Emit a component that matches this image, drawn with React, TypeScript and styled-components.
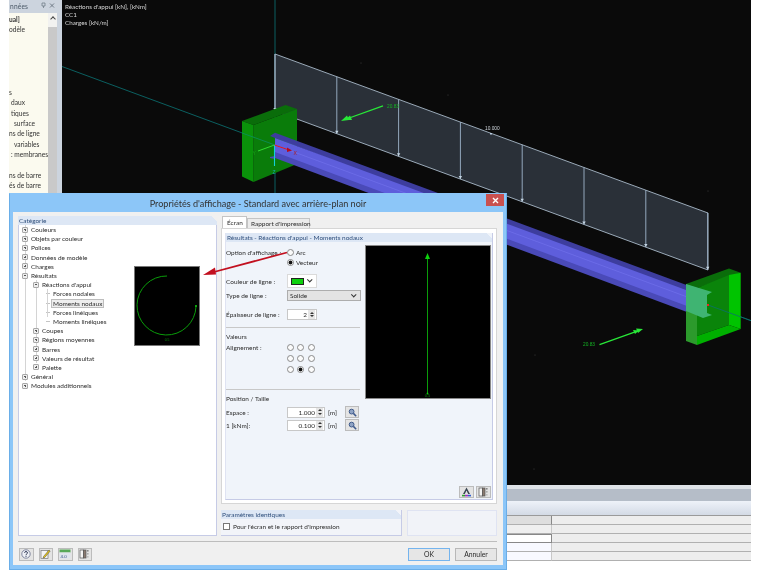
import styled, { createGlobalStyle } from "styled-components";
import { ReactNode } from "react";

const Global = createGlobalStyle`
  html, body { margin: 0; padding: 0; background: #fff; overflow: hidden; }
  * { box-sizing: border-box; }
`;

const Page = styled.div`
  position: relative;
  width: 760px;
  height: 570px;
  padding: 0 9px;
  background: #fff;
  font-family: "Lato", "Liberation Sans", sans-serif;
  font-size: 6.45px;
  color: #2c2c2c;
  overflow: hidden;
  filter: blur(0.25px);
`;

const AppWindow = styled.div`
  display: flex;
  flex-direction: column;
  height: 570px;
`;

const MainRow = styled.div`
  display: flex;
  height: 485px;
`;

const SidePanel = styled.div`
  width: 53px;
  display: flex;
  flex-direction: column;
  background: #ccd4de;
`;

const SideHeader = styled.div`
  height: 11px;
  display: flex;
  align-items: center;
  justify-content: space-between;
  padding: 0 2px 0 1px;
  width: 48px;
  color: #4a5866;
  font-size: 6.6px;
  span { letter-spacing: 0.2px; }
`;

const SideBody = styled.div`
  margin-top: 2px;
  flex: 1;
  width: 47px;
  display: flex;
  background: #fbfaef;
  position: relative;
`;

const SideList = styled.div`
  width: 39px;
  padding-top: 1px;
  white-space: nowrap;
  font-size: 6.6px;
`;

const SideItem = styled.div<{ $indent?: number; $bold?: boolean }>`
  height: 10.4px;
  line-height: 10.4px;
  padding-left: ${(p) => p.$indent ?? 0}px;
  font-weight: ${(p) => (p.$bold ? 700 : 400)};
  color: #333;
`;

const SideScroll = styled.div`
  position: absolute;
  top: 0;
  right: -1px;
  width: 9px;
  height: 100%;
  background: #c9c9c9;
  &::before {
    content: "";
    display: block;
    height: 14px;
    background: #f2f2f0;
  }
  &::after {
    content: "";
    position: absolute;
    top: 4px;
    left: 2.5px;
    width: 3px;
    height: 3px;
    border-left: 1px solid #444;
    border-top: 1px solid #444;
    transform: rotate(45deg);
  }
`;

const Viewport = styled.div`
  flex: 1;
  position: relative;
  background: #0a0a0a;
  padding: 3px 3px;
  color: #d8d8d8;
  font-size: 6.3px;
  line-height: 8px;
`;

const SceneSvg = styled.svg`
  position: absolute;
  left: 0;
  top: 0;
`;

const Caption = styled.div`
  position: relative;
`;

const BottomPane = styled.div`
  flex: 1;
  display: flex;
  flex-direction: column;
`;

const SplitStrip = styled.div`
  height: 4px;
  background: #dfe3e8;
`;

const GreyBand = styled.div`
  height: 12px;
  background: #b5bdc8;
`;

const GradientBand = styled.div`
  height: 15px;
  background: linear-gradient(#eef2f9, #d3dae5);
  border-bottom: 1px solid #9a9a9a;
`;

const ResultTable = styled.div`
  flex: 1;
  display: grid;
  grid-template-columns: 543px 1fr;
  grid-auto-rows: 9.1px;
`;

const Cell = styled.div<{ $kind: "head" | "plain" | "input" | "side" }>`
  border-bottom: 1px solid #b0b0b0;
  border-right: ${(p) =>
    p.$kind === "side"
      ? "none"
      : p.$kind === "head"
        ? "1px solid #888"
        : "1px solid #c8c8c8"};
  background: ${(p) =>
    p.$kind === "head"
      ? "#dedede"
      : p.$kind === "input"
        ? "#f8f9ff"
        : p.$kind === "side"
          ? "#ededed"
          : "#efefef"};
`;

const SelectedCell = styled(Cell)`
  background: #fff;
  border: 1px solid #888;
`;

/* dialog */

const Dialog = styled.div`
  position: absolute;
  left: 9px;
  top: 193px;
  width: 498px;
  height: 377px;
  display: flex;
  flex-direction: column;
  background: #8cc6f8;
  border: 1px solid #6aaee8;
  border-top-color: #8cc6f8;
  padding: 0 3px 4px 3px;
`;

const TitleBar = styled.div`
  position: relative;
  height: 18px;
  flex: none;
  display: flex;
  align-items: center;
  justify-content: center;
  font-size: 9.1px;
  color: #333;
`;

const CloseButton = styled.div`
  position: absolute;
  right: -1px;
  top: 0;
  width: 18px;
  height: 12px;
  background: #c9504f;
  display: flex;
  align-items: center;
  justify-content: center;
`;

const DialogBody = styled.div`
  flex: 1;
  display: flex;
  flex-direction: column;
  background: #f0f0f0;
  padding: 4px 5px 0 5px;
`;

const DialogColumns = styled.div`
  display: flex;
  gap: 4px;
  height: 320px;
`;

const LeftColumn = styled.div`
  width: 199px;
  display: flex;
  flex-direction: column;
`;

const RightColumn = styled.div`
  width: 276px;
  display: flex;
  flex-direction: column;
`;

const GroupHeader = styled.div`
  height: 9px;
  flex: none;
  line-height: 9px;
  padding-left: 1px;
  background: linear-gradient(225deg, transparent 4px, #dde7f5 4px);
  color: #2f4f7c;
`;

const TreeBox = styled.div`
  flex: 1;
  display: flex;
  background: #fff;
  border: 1px solid #c6cbe6;
  border-top: none;
`;

const TreeList = styled.div`
  width: 114px;
  padding: 0 0 0 3px;
`;

const TreeRow = styled.div<{ $level: number }>`
  position: relative;
  height: 9.2px;
  display: flex;
  align-items: center;
  gap: 3px;
  padding-left: ${(p) => p.$level * 11}px;
  white-space: nowrap;
`;

const TreeLine = styled.span<{ $level: number }>`
  position: absolute;
  top: 0;
  bottom: 0;
  left: ${(p) => 2.7 + p.$level * 11}px;
  width: 1px;
  background: #d4d4d4;
`;

const TreeHook = styled.span`
  width: 4px;
  height: 1px;
  margin-left: 2px;
  flex: none;
  background: #c4c4c4;
`;

const Expander = styled.span<{ $open?: boolean }>`
  position: relative;
  z-index: 1;
  width: 6px;
  height: 6px;
  flex: none;
  border: 1px solid #a8a8a8;
  border-radius: 1px;
  background: #eee;
  &::before {
    content: "";
    position: absolute;
    left: 1px;
    right: 1px;
    top: 1.5px;
    height: 1px;
    background: #555;
  }
  &::after {
    content: "";
    display: ${(p) => (p.$open ? "none" : "block")};
    position: absolute;
    top: 1px;
    bottom: 1px;
    left: 1.5px;
    width: 1px;
    background: #555;
  }
`;

const TreeLabel = styled.span<{ $selected?: boolean }>`
  padding: 0 1px;
  margin-left: -1px;
  ${(p) => p.$selected && "background: #eee; outline: 1px solid #bdbdbd;"}
`;

const ArcPreview = styled.div`
  width: 66px;
  height: 80px;
  margin: 41px 0 0 1px;
  background: #000;
  border: 1px solid #777;
  flex: none;
`;

const TabRow = styled.div`
  display: flex;
  align-items: flex-end;
  height: 12px;
  padding-left: 1px;
  flex: none;
`;

const Tab = styled.div<{ $active?: boolean }>`
  height: ${(p) => (p.$active ? 12 : 10)}px;
  padding: 0 ${(p) => (p.$active ? 4 : 3)}px;
  line-height: ${(p) => (p.$active ? 11 : 10)}px;
  background: ${(p) => (p.$active ? "#fff" : "#ececec")};
  border: 1px solid #c4c4c4;
  border-bottom: none;
  width: ${(p) => (p.$active ? 25 : 63)}px;
  white-space: nowrap;
`;

const TabPanel = styled.div`
  height: 276px;
  flex: none;
  background: #fff;
  border: 1px solid #d6d6d6;
  padding: 4px 3px 3px 3px;
  display: flex;
  flex-direction: column;
`;

const ResultPanel = styled.div`
  flex: 1;
  display: flex;
  flex-direction: column;
  background: #f0f4fa;
  border-right: 1px solid #c6cbe6;
  border-bottom: 1px solid #c6cbe6;
  border-left: 1px solid #dfe3f2;
  position: relative;
`;

const PanelColumns = styled.div`
  display: flex;
  gap: 4px;
  padding: 3px 1px 0 0;
  flex: 1;
`;

const FormColumn = styled.div`
  flex: 1;
  min-width: 0;
  display: flex;
  flex-direction: column;
`;

const FieldRow = styled.div<{ $top?: number; $height?: number }>`
  display: flex;
  align-items: center;
  height: ${(p) => p.$height ?? 11}px;
  margin-top: ${(p) => p.$top ?? 0}px;
  white-space: nowrap;
`;

const OptionRow = styled(FieldRow)`
  align-items: flex-start;
  line-height: 7px;
`;

const FieldLabel = styled.div`
  width: 61px;
  flex: none;
`;

const Rule = styled.div<{ $top: number }>`
  height: 1px;
  width: 134px;
  background: #c8c8c8;
  margin-top: ${(p) => p.$top}px;
`;

const Radio = styled.span<{ $on?: boolean }>`
  display: inline-block;
  width: 7px;
  height: 7px;
  flex: none;
  border-radius: 50%;
  border: 1px solid #8a8a8a;
  background: ${(p) =>
    p.$on
      ? "radial-gradient(circle, #111 0, #111 1.7px, #f7f7f7 2.2px)"
      : "#fbfbfb"};
`;

const OptionStack = styled.div`
  display: flex;
  flex-direction: column;
  gap: 3px;
`;

const OptionLine = styled.div`
  display: flex;
  align-items: center;
  gap: 2px;
  height: 7px;
`;

const ColorPicker = styled.div`
  width: 30px;
  height: 14px;
  background: #fff;
  border: 1px solid #dadada;
  display: flex;
  align-items: center;
  gap: 4px;
  padding-left: 3px;
`;

const Swatch = styled.span`
  width: 13px;
  height: 7px;
  background: #0dd00d;
  border: 1px solid #222;
`;

const Chevron = styled.span`
  width: 3.5px;
  height: 3.5px;
  border-right: 1px solid #333;
  border-bottom: 1px solid #333;
  transform: rotate(45deg) translate(-1px, -1px);
`;

const SelectBox = styled.div`
  width: 74px;
  height: 11px;
  display: flex;
  align-items: center;
  justify-content: space-between;
  padding: 0 5px 0 2px;
  background: #e3e3e3;
  border: 1px solid #adadad;
`;

const SpinBox = styled.div<{ $width: number }>`
  width: ${(p) => p.$width}px;
  height: 11px;
  display: flex;
  justify-content: flex-end;
  align-items: center;
  background: #fff;
  border: 1px solid #c8c8c8;
  padding-right: 1px;
  gap: 1px;
  flex: none;
`;

const SpinArrows = styled.span`
  width: 7px;
  height: 9px;
  flex: none;
  background: #e6e6e6;
  display: flex;
  flex-direction: column;
  align-items: center;
  justify-content: space-around;
  padding: 1px 0;
  i {
    width: 0;
    height: 0;
    border-left: 2px solid transparent;
    border-right: 2px solid transparent;
  }
  i:first-child { border-bottom: 2.5px solid #333; }
  i:last-child { border-top: 2.5px solid #333; }
`;

const AlignGridOffset = styled.div`
  height: 11px;
  padding: 2px 0 0 0;
  margin-left: -0.5px;
  align-self: flex-start;
`;

const AlignGrid = styled.div`
  display: grid;
  grid-template-columns: repeat(3, 7px);
  gap: 4px 3.5px;
`;

const SizeUnit = styled.span`
  margin: 0 9px 0 3px;
  width: 8px;
  flex: none;
`;

const ToolButton = styled.div<{ $w?: number }>`
  width: ${(p) => p.$w ?? 14}px;
  height: 12.5px;
  flex: none;
  display: flex;
  align-items: center;
  justify-content: center;
  background: #e4e4e4;
  border: 1px solid #bcbcbc;
`;

const VectorPreview = styled.div`
  width: 126px;
  height: 154px;
  flex: none;
  background: #000;
  border: 1px solid #888;
`;

const PanelFooter = styled.div`
  display: flex;
  justify-content: flex-end;
  gap: 2px;
  padding: 0 1px 1px 0;
`;

const SharedRow = styled.div`
  display: flex;
  gap: 5px;
  margin-top: 6px;
  height: 27px;
`;

const SharedGroup = styled.div`
  width: 181px;
  display: flex;
  flex-direction: column;
  background: #f2f4f9;
  border-right: 1px solid #c6cbe6;
  border-bottom: 1px solid #c6cbe6;
`;

const SharedCheck = styled.div`
  display: flex;
  align-items: center;
  gap: 3px;
  padding: 4px 0 0 2px;
`;

const CheckBox = styled.span`
  width: 7px;
  height: 7px;
  background: #fff;
  border: 1px solid #777;
`;

const BlankGroup = styled.div`
  width: 90px;
  background: #f1f3f8;
  border: 1px solid #dfe3f2;
`;

const ButtonBar = styled.div`
  flex: 1;
  margin-top: 5px;
  margin-right: 1px;
  border-top: 1px solid #bdbdbd;
  display: flex;
  align-items: flex-start;
  justify-content: space-between;
  padding: 6px 0 0 1px;
`;

const BarGroup = styled.div<{ $gap: number }>`
  display: flex;
  gap: ${(p) => p.$gap}px;
`;

const PushButton = styled.div<{ $primary?: boolean }>`
  width: 42px;
  height: 12.5px;
  display: flex;
  align-items: center;
  justify-content: center;
  background: #e6e6e6;
  border: 1px solid ${(p) => (p.$primary ? "#74b4ee" : "#b8b8b8")};
  font-size: 6.8px;
`;

const ArrowOverlay = styled.svg`
  position: absolute;
  left: 0;
  top: 0;
  pointer-events: none;
`;

/* data */

type TreeItem = {
  label: string;
  level: number;
  mark: "closed" | "open" | "leaf";
  selected?: boolean;
  guides?: number[];
};

const tree: TreeItem[] = [
  { label: "Couleurs", level: 0, mark: "closed", guides: [0] },
  { label: "Objets par couleur", level: 0, mark: "closed", guides: [0] },
  { label: "Polices", level: 0, mark: "closed", guides: [0] },
  { label: "Données de modèle", level: 0, mark: "closed", guides: [0] },
  { label: "Charges", level: 0, mark: "closed", guides: [0] },
  { label: "Résultats", level: 0, mark: "open", guides: [0] },
  { label: "Réactions d'appui", level: 1, mark: "open", guides: [0, 1] },
  { label: "Forces nodales", level: 2, mark: "leaf", guides: [0, 1, 2] },
  { label: "Moments nodaux", level: 2, mark: "leaf", selected: true, guides: [0, 1, 2] },
  { label: "Forces linéiques", level: 2, mark: "leaf", guides: [0, 1, 2] },
  { label: "Moments linéiques", level: 2, mark: "leaf", guides: [0, 1] },
  { label: "Coupes", level: 1, mark: "closed", guides: [0, 1] },
  { label: "Régions moyennes", level: 1, mark: "closed", guides: [0, 1] },
  { label: "Barres", level: 1, mark: "closed", guides: [0, 1] },
  { label: "Valeurs de résultat", level: 1, mark: "closed", guides: [0, 1] },
  { label: "Palette", level: 1, mark: "closed", guides: [0] },
  { label: "Général", level: 0, mark: "closed", guides: [0] },
  { label: "Modules additionnels", level: 0, mark: "closed" },
];

const sideItems: { text: string; indent?: number; bold?: boolean }[] = [
  { text: "ual]", bold: true },
  { text: "odèle" },
  { text: "" },
  { text: "" },
  { text: "" },
  { text: "" },
  { text: "" },
  { text: "s" },
  { text: "daux", indent: 2 },
  { text: "tiques", indent: 2 },
  { text: "surface", indent: 5 },
  { text: "ns de ligne" },
  { text: "variables", indent: 5 },
  { text: ": membranes", indent: 2 },
  { text: "" },
  { text: "ns de barre" },
  { text: "és de barre" },
];

const loadArrowXs = [275, 336.8, 398.6, 460.4, 522.2, 584, 645.8, 707.7];

/* drawings */

const Scene = () => (
  <SceneSvg width={689} height={485} viewBox="62 0 689 485">
    <line x1="62" y1="66.5" x2="752" y2="321" stroke="#0b5f60" strokeWidth="1" />
    <line x1="275" y1="0" x2="275" y2="200" stroke="#0b5f60" strokeWidth="1" />

    <polygon points="275,54 708,213 708,270 275,111" fill="#2a3038" />
    <polyline
      points="275,111 275,54 708,213 708,270 275,111"
      fill="none"
      stroke="#a9bac9"
      strokeWidth="0.9"
    />
    {loadArrowXs.map((x) => {
      const top = 54 + (x - 275) * 0.367;
      const bottom = top + 57;
      return (
        <g key={x}>
          <line x1={x} y1={top} x2={x} y2={bottom} stroke="#9fb6cc" strokeWidth="0.9" />
          <polygon
            points={`${x - 1.7},${bottom - 3} ${x + 1.7},${bottom - 3} ${x},${bottom}`}
            fill="#c3d4e2"
          />
        </g>
      );
    })}
    <text x="485" y="130" fontSize="4.8" fill="#cfd6dc" fontFamily="Liberation Sans">
      10.000
    </text>
    <rect x="490" y="133" width="2" height="1.5" fill="#b8cbe0" />
    <circle cx="361" cy="63" r="0.4" fill="#777" />
    <circle cx="448" cy="95" r="0.4" fill="#777" />
    <circle cx="708" cy="191" r="0.4" fill="#777" />
    <circle cx="535" cy="355" r="0.4" fill="#777" />
    <circle cx="534" cy="469" r="0.4" fill="#777" />

    <polygon points="242,121 285.5,105 297,109 253.5,125" fill="#0a6d0a" />
    <polygon points="253.5,125 297,109 297,164 253.5,182" fill="#0a7c0a" />
    <polygon points="242,121 253.5,125 253.5,182 242,176.5" fill="#0a920a" />
    <line x1="242" y1="133" x2="275" y2="145" stroke="#0b8f63" strokeWidth="0.8" />

    <polygon points="270,136 275,132.7 700,290 686,296" fill="#3d3d9e" />
    <polygon points="275,138 686,290 703,316 275,157" fill="#5e5edc" />
    <polygon points="275,152 703,312 703,318 275,158" fill="#4a4ab8" />
    <line x1="275" y1="145" x2="690" y2="298" stroke="#7474ee" strokeWidth="0.6" />
    <polygon points="270,157 275,156 275,159 270,158" fill="#4a4ab8" />

    <polygon points="686,284 729,268.5 740.7,272.7 697,288" fill="#0a6d0a" />
    <polygon points="697,288 729,275 729,325 697,336" fill="#0a840a" />
    <polygon points="729,275 740.7,272.7 740.7,329 729,325" fill="#00c400" />
    <polygon points="697,336 729,325 740.7,329 697,345" fill="#00b000" />
    <polygon points="686,284 697,288 697,345 686,341" fill="#2c9a2c" />
    <polygon
      points="686,284 712,292 707,295 707,313 712,315 703,318 686,311"
      fill="#3fb472"
    />
    <line x1="708" y1="305" x2="752" y2="321" stroke="#0b6f70" strokeWidth="0.8" />
    <rect x="707" y="304" width="2" height="2" fill="#ee2222" />

    <line x1="383" y1="105.8" x2="345" y2="119.5" stroke="#28e838" strokeWidth="1.3" />
    <polygon points="341,121 347,115.5 349,120" fill="#28e838" />
    <polygon points="345,120 350,115.5 352,120" fill="#28e838" />
    <text x="387" y="107.5" fontSize="4.8" fill="#14b524" fontFamily="Liberation Sans">
      20.83
    </text>
    <line x1="599.5" y1="344.7" x2="638" y2="330.8" stroke="#28e838" strokeWidth="1.3" />
    <polygon points="643,329 636,328.5 638,333" fill="#28e838" />
    <polygon points="639,330.5 633,330 635,334" fill="#28e838" />
    <text x="583" y="346" fontSize="4.8" fill="#14b524" fontFamily="Liberation Sans">
      20.83
    </text>

    <line x1="274.5" y1="145" x2="258" y2="151" stroke="#2fdc2f" strokeWidth="1" />
    <line x1="274.5" y1="145" x2="274.5" y2="166" stroke="#14d0d8" strokeWidth="1.1" />
    <line x1="274.5" y1="145" x2="289" y2="150" stroke="#e81414" strokeWidth="1" />
    <polygon points="292,150.5 287,147.5 287,152" fill="#b80a1a" />
    <text x="252.5" y="155" fontSize="5" fill="#18a818" fontFamily="Liberation Sans">Y</text>
    <text x="293.5" y="155" fontSize="5" fill="#b01818" fontFamily="Liberation Sans">X</text>
    <text x="272.5" y="174" fontSize="5" fill="#16a8a8" fontFamily="Liberation Sans">Z</text>
  </SceneSvg>
);

const ArcDrawing = () => (
  <svg width={64} height={78} viewBox="0 0 64 78">
    <path
      d="M32 9 A29.5 29.5 0 1 0 61 39.5"
      fill="none"
      stroke="#0a9c0a"
      strokeWidth="1"
    />
    <circle cx="61" cy="39" r="1" fill="#12d012" />
    <text x="32" y="74" fontSize="3.4" fill="#0a8a0a" textAnchor="middle" fontFamily="Liberation Sans">
      0.5
    </text>
  </svg>
);

const VectorDrawing = () => (
  <svg width={124} height={152} viewBox="0 0 124 152">
    <line x1="61.5" y1="12" x2="61.5" y2="147" stroke="#0a9c0a" strokeWidth="1" />
    <polygon points="61.5,7 59,13 64,13" fill="#0ed00e" />
    <circle cx="61.5" cy="147.5" r="0.9" fill="#0ed00e" />
    <text x="61.5" y="151" fontSize="4" fill="#0a8a0a" textAnchor="middle" fontFamily="Liberation Sans">
      0.5
    </text>
  </svg>
);

const MagnifierIcon = () => (
  <svg width={9} height={9} viewBox="0 0 9 9">
    <circle cx="3.6" cy="3.6" r="2.4" fill="#8fa3c4" stroke="#3e5a8c" strokeWidth="1" />
    <line x1="5.4" y1="5.4" x2="8.2" y2="8.2" stroke="#3e5a8c" strokeWidth="1.5" />
  </svg>
);

const BookIcon = () => (
  <svg width={11} height={10} viewBox="0 0 11 10">
    <rect x="1" y="1" width="3.5" height="8" fill="#f4f4f4" stroke="#555" strokeWidth="0.7" />
    <rect x="4.5" y="1" width="2.5" height="8" fill="#8a7a70" stroke="#555" strokeWidth="0.7" />
    <rect x="8" y="1" width="1.6" height="1.6" fill="#888" />
    <rect x="8" y="4" width="1.6" height="1.6" fill="#aaa" />
    <rect x="8" y="7" width="1.6" height="1.6" fill="#bbb" />
  </svg>
);

const FontColorIcon = () => (
  <svg width={11} height={10} viewBox="0 0 11 10">
    <path d="M5.5 0.5 L9 7 H7.2 L5.5 3.4 L3.8 7 H2 Z" fill="#3a4652" />
    <rect x="1" y="7.8" width="3" height="1.6" fill="#2fa02f" />
    <rect x="4" y="7.8" width="3" height="1.6" fill="#a02fc0" />
    <rect x="7" y="7.8" width="3" height="1.6" fill="#2f5fd0" />
  </svg>
);

const HelpIcon = () => (
  <svg width={10} height={10} viewBox="0 0 10 10">
    <circle cx="5" cy="5" r="4.2" fill="#eef0f6" stroke="#68708c" strokeWidth="0.8" />
    <path d="M3.5 3.7 C3.6 2.2 6.5 2.2 6.5 3.8 C6.5 4.9 5 4.9 5 6.1" fill="none" stroke="#26304e" strokeWidth="1" />
    <rect x="4.5" y="6.8" width="1" height="1" fill="#26304e" />
  </svg>
);

const EditIcon = () => (
  <svg width={11} height={10} viewBox="0 0 11 10">
    <rect x="1" y="1.5" width="7" height="8" fill="#f4f4f4" stroke="#777" strokeWidth="0.7" />
    <path d="M3.5 7.5 L9 1 L10.2 2 L4.8 8.4 L3.2 8.9 Z" fill="#e8c820" stroke="#222" strokeWidth="0.4" />
  </svg>
);

const TableIcon = () => (
  <svg width={12} height={10} viewBox="0 0 12 10">
    <rect x="0.5" y="0.5" width="11" height="3" fill="#58a858" />
    <rect x="0.5" y="3.5" width="11" height="6" fill="#dfe4ec" />
    <text x="1.5" y="8.6" fontSize="4.4" fill="#2c4c80" fontFamily="Liberation Sans">4.0</text>
  </svg>
);

const Spin = () => (
  <SpinArrows>
    <i />
    <i />
  </SpinArrows>
);

const AlignRadios = () => (
  <AlignGridOffset>
    <AlignGrid>
      {Array.from({ length: 9 }, (_, i) => (
        <Radio key={i} $on={i === 7} />
      ))}
    </AlignGrid>
  </AlignGridOffset>
);

const SizeRow = ({ label, value, top }: { label: string; value: string; top: number }) => (
  <FieldRow $top={top}>
    <FieldLabel>{label}</FieldLabel>
    <SpinBox $width={38}>
      {value}
      <Spin />
    </SpinBox>
    <SizeUnit>[m]</SizeUnit>
    <ToolButton>
      <MagnifierIcon />
    </ToolButton>
  </FieldRow>
);

const Form = () => (
  <FormColumn>
    <OptionRow $top={3.5} $height={17}>
      <FieldLabel>Option d'affichage :</FieldLabel>
      <OptionStack>
        <OptionLine>
          <Radio />
          Arc
        </OptionLine>
        <OptionLine>
          <Radio $on />
          Vecteur
        </OptionLine>
      </OptionStack>
    </OptionRow>
    <FieldRow $top={8.5} $height={14}>
      <FieldLabel>Couleur de ligne :</FieldLabel>
      <ColorPicker>
        <Swatch />
        <Chevron />
      </ColorPicker>
    </FieldRow>
    <FieldRow $top={2}>
      <FieldLabel>Type de ligne :</FieldLabel>
      <SelectBox>
        Solide
        <Chevron />
      </SelectBox>
    </FieldRow>
    <FieldRow $top={8}>
      <FieldLabel>Épaisseur de ligne :</FieldLabel>
      <SpinBox $width={30}>
        2
        <Spin />
      </SpinBox>
    </FieldRow>
    <Rule $top={7} />
    <FieldRow $top={2.5}>Valeurs</FieldRow>
    <FieldRow $top={0.5}>
      <FieldLabel>Alignement :</FieldLabel>
      <AlignRadios />
    </FieldRow>
    <Rule $top={36} />
    <FieldRow $top={2.5}>Position / Taille</FieldRow>
    <SizeRow label="Espace :" value="1.000" top={3} />
    <SizeRow label="1  [kNm]:" value="0.100" top={2} />
  </FormColumn>
);

const Tool = ({ children, w }: { children: ReactNode; w?: number }) => (
  <ToolButton $w={w}>{children}</ToolButton>
);

export default function App() {
  return (
    <Page>
      <Global />
      <AppWindow>
        <MainRow>
          <SidePanel>
            <SideHeader>
              <span>nnées</span>
              <svg width={15} height={7} viewBox="0 0 15 7">
                <path d="M2 1 H5 V4 H2 Z M3.5 4 V6" fill="none" stroke="#66727e" strokeWidth="0.7" />
                <path d="M10 1.5 L14 5.5 M14 1.5 L10 5.5" stroke="#66727e" strokeWidth="0.9" />
              </svg>
            </SideHeader>
            <SideBody>
              <SideList>
                {sideItems.map((item, i) => (
                  <SideItem key={i} $indent={item.indent} $bold={item.bold}>
                    {item.text}
                  </SideItem>
                ))}
              </SideList>
              <SideScroll />
            </SideBody>
          </SidePanel>
          <Viewport>
            <Scene />
            <Caption>Réactions d'appui [kN], [kNm]</Caption>
            <Caption>CC1</Caption>
            <Caption>Charges [kN/m]</Caption>
          </Viewport>
        </MainRow>
        <BottomPane>
          <SplitStrip />
          <GreyBand />
          <GradientBand />
          <ResultTable>
            <Cell $kind="head" />
            <Cell $kind="side" />
            <Cell $kind="plain" />
            <Cell $kind="side" />
            <SelectedCell $kind="input" />
            <Cell $kind="side" />
            <Cell $kind="input" />
            <Cell $kind="side" />
            <Cell $kind="input" />
            <Cell $kind="side" />
          </ResultTable>
        </BottomPane>
      </AppWindow>

      <Dialog>
        <TitleBar>
          Propriétés d'affichage - Standard avec arrière-plan noir
          <CloseButton>
            <svg width={7} height={7} viewBox="0 0 7 7">
              <path d="M1 1 L6 6 M6 1 L1 6" stroke="#fff" strokeWidth="1.4" />
            </svg>
          </CloseButton>
        </TitleBar>
        <DialogBody>
          <DialogColumns>
            <LeftColumn>
              <GroupHeader>Catégorie</GroupHeader>
              <TreeBox>
                <TreeList>
                  {tree.map((row) => (
                    <TreeRow key={row.label} $level={row.level}>
                      {row.guides?.map((g) => (
                        <TreeLine key={g} $level={g} />
                      ))}
                      {row.mark === "leaf" ? (
                        <TreeHook />
                      ) : (
                        <Expander $open={row.mark === "open"} />
                      )}
                      <TreeLabel $selected={row.selected}>{row.label}</TreeLabel>
                    </TreeRow>
                  ))}
                </TreeList>
                <ArcPreview>
                  <ArcDrawing />
                </ArcPreview>
              </TreeBox>
            </LeftColumn>
            <RightColumn>
              <TabRow>
                <Tab $active>Écran</Tab>
                <Tab>Rapport d'impression</Tab>
              </TabRow>
              <TabPanel>
                <ResultPanel>
                  <GroupHeader>Résultats - Réactions d'appui - Moments nodaux</GroupHeader>
                  <PanelColumns>
                    <Form />
                    <VectorPreview>
                      <VectorDrawing />
                    </VectorPreview>
                  </PanelColumns>
                  <PanelFooter>
                    <Tool w={15}>
                      <FontColorIcon />
                    </Tool>
                    <Tool w={15}>
                      <BookIcon />
                    </Tool>
                  </PanelFooter>
                </ResultPanel>
              </TabPanel>
              <SharedRow>
                <SharedGroup>
                  <GroupHeader>Paramètres identiques</GroupHeader>
                  <SharedCheck>
                    <CheckBox />
                    Pour l'écran et le rapport d'impression
                  </SharedCheck>
                </SharedGroup>
                <BlankGroup />
              </SharedRow>
            </RightColumn>
          </DialogColumns>
          <ButtonBar>
            <BarGroup $gap={5}>
              <Tool w={14.5}>
                <HelpIcon />
              </Tool>
              <Tool w={14.5}>
                <EditIcon />
              </Tool>
              <Tool w={14.5}>
                <TableIcon />
              </Tool>
              <Tool w={14.5}>
                <BookIcon />
              </Tool>
            </BarGroup>
            <BarGroup $gap={5}>
              <PushButton $primary>OK</PushButton>
              <PushButton>Annuler</PushButton>
            </BarGroup>
          </ButtonBar>
        </DialogBody>
      </Dialog>

      <ArrowOverlay width={760} height={570} viewBox="0 0 760 570">
        <line x1="287" y1="252.5" x2="212" y2="272.5" stroke="#c2101f" strokeWidth="1.8" />
        <polygon points="203,275 215,267.5 216,274.5" fill="#c2101f" />
      </ArrowOverlay>
    </Page>
  );
}
